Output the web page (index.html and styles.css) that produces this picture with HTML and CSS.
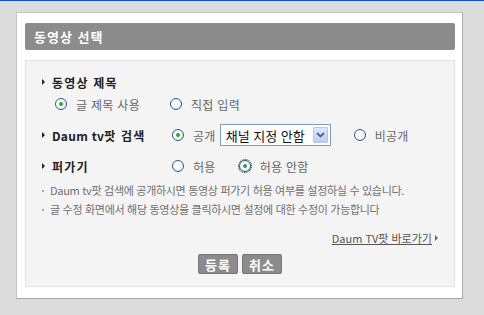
FILE: index.html
```html
<!DOCTYPE html>
<html lang="ko">
<head>
  <meta charset="UTF-8">
  <title>동영상 선택</title>
  <link rel="stylesheet" href="styles.css">
</head>
<body>

<div class="panel">
  <div class="panel-title">동영상 선택</div>

  <div class="panel-body">
    <div class="row row-label">
      <span class="arrow"></span><b>동영상 제목</b>
    </div>
    <div class="row row-sub">
      <label class="opt"><span class="radio checked"></span>글 제목 사용</label>
      <label class="opt opt-second"><span class="radio"></span>직접 입력</label>
    </div>

    <div class="row row-field">
      <div class="field-name"><span class="arrow"></span><b><span class="latin">Daum tv</span>팟 검색</b></div>
      <label class="opt"><span class="radio checked"></span>공개</label>
      <div class="select">
        <span class="select-text">채널 지정 안함</span>
        <span class="select-btn">
          <svg width="9" height="6" viewBox="0 0 9 6"><path d="M1 1 L4.5 4.5 L8 1" fill="none" stroke="#4d6185" stroke-width="1.8"/></svg>
        </span>
      </div>
      <label class="opt opt-private"><span class="radio"></span>비공개</label>
    </div>

    <div class="row row-field">
      <div class="field-name"><span class="arrow"></span><b>퍼가기</b></div>
      <label class="opt"><span class="radio"></span>허용</label>
      <label class="opt opt-deny"><span class="radio checked focus"></span>허용 안함</label>
    </div>

    <ul class="notes">
      <li>Daum tv팟 검색에 공개하시면 동영상 퍼가기 허용 여부를 설정하실 수 있습니다.</li>
      <li>글 수정 화면에서 해당 동영상을 클릭하시면 설정에 대한 수정이 가능합니다</li>
    </ul>

    <div class="more">
      <a href="#">Daum TV팟 바로가기</a><span class="more-arrow"></span>
    </div>

    <div class="buttons">
      <button class="btn">등록</button>
      <button class="btn">취소</button>
    </div>
  </div>
</div>

</body>
</html>
```

FILE: styles.css
```css
body {
  margin: 0;
  background: #dcdcdc;
  border-top: 1px solid #0a4fd4;
  font-family: "Noto Sans CJK KR", "Noto Sans", sans-serif;
  font-size: 12px;
  color: #555;
}

.panel {
  margin: 11px 0 0 16px;
  width: 430px;
  padding: 10px 7px 11px 8px;
  background: #fff;
  border: 1px solid #c4c4c4;
  border-right-color: #a8a8a8;
  border-bottom-color: #a8a8a8;
}

.panel-title {
  height: 27px;
  line-height: 27px;
  padding-left: 9px;
  background: #8c8c8c;
  border-radius: 2px;
  color: #fff;
  font-size: 13px;
  font-weight: bold;
  letter-spacing: 1px;
}

.panel-body {
  margin-top: 10px;
  height: 209px;
  padding: 10px 0 6px 0;
  background: #f4f4f4;
  border: 1px solid #e2e2e2;
}

.row {
  display: flex;
  align-items: center;
  height: 22px;
}

.row b {
  color: #222;
  font-size: 12px;
  letter-spacing: 1.2px;
}

.row b .latin {
  letter-spacing: 0.3px;
}

.arrow {
  display: inline-block;
  width: 0;
  height: 0;
  margin: 0 7px 0 16px;
  border-left: 3px solid #222;
  border-top: 3px solid transparent;
  border-bottom: 3px solid transparent;
}

.row-sub {
  padding-left: 29px;
}

.row-field {
  margin-top: 9px;
}

.field-name {
  width: 146px;
  display: flex;
  align-items: center;
}

.opt {
  display: flex;
  align-items: center;
  color: #666;
  letter-spacing: 0.3px;
}

.opt-second {
  margin-left: 30px;
}

.opt-private {
  margin-left: 23px;
}

.opt-deny {
  margin-left: 23px;
}

.radio {
  width: 10px;
  height: 10px;
  margin-right: 9px;
  border: 1px solid #2c5a85;
  border-radius: 50%;
  background: radial-gradient(circle at 40% 40%, #fff 30%, #dfe6ec 100%);
  position: relative;
}

.radio.checked::after {
  content: "";
  position: absolute;
  left: 3px;
  top: 3px;
  width: 4px;
  height: 4px;
  border-radius: 50%;
  background: #2aa52a;
}

.radio.focus {
  outline: 1px dotted #222;
  outline-offset: 0;
}

.select {
  margin-left: 4px;
  width: 109px;
  height: 20px;
  border: 1px solid #7f9db9;
  background: #fff;
  display: flex;
  align-items: center;
  justify-content: space-between;
}

.select-text {
  padding-left: 5px;
  font-size: 13px;
  color: #111;
}

.select-btn {
  width: 15px;
  height: 16px;
  margin-right: 2px;
  background: linear-gradient(#dfe8fd, #b9cdf7);
  border: 1px solid #b3c6ee;
  border-radius: 1px;
  box-sizing: border-box;
  display: flex;
  align-items: center;
  justify-content: center;
}

.notes {
  list-style: none;
  margin: 4px 0 0 0;
  padding: 0 0 0 15px;
  font-size: 11px;
  color: #707070;
  letter-spacing: -0.3px;
}

.notes li {
  height: 19px;
  line-height: 19px;
}

.notes li::before {
  content: "";
  display: inline-block;
  width: 2px;
  height: 2px;
  margin: 0 6px 3px 1px;
  background: #aaa;
}

.more {
  margin-top: 10px;
  padding-right: 16px;
  display: flex;
  justify-content: flex-end;
  align-items: center;
  height: 18px;
}

.more a {
  color: #555;
  font-size: 11px;
}

.more-arrow {
  margin-left: 3px;
  border-left: 3px solid #666;
  border-top: 3px solid transparent;
  border-bottom: 3px solid transparent;
}

.buttons {
  margin-top: 7px;
  display: flex;
  justify-content: center;
  gap: 4px;
}

.btn {
  width: 40px;
  height: 20px;
  padding: 0;
  background: #8c8c8c;
  border: 1px solid #777;
  border-radius: 2px;
  color: #fff;
  font-family: inherit;
  font-size: 13px;
  font-weight: bold;
  line-height: 17px;
  letter-spacing: 1px;
}
```
